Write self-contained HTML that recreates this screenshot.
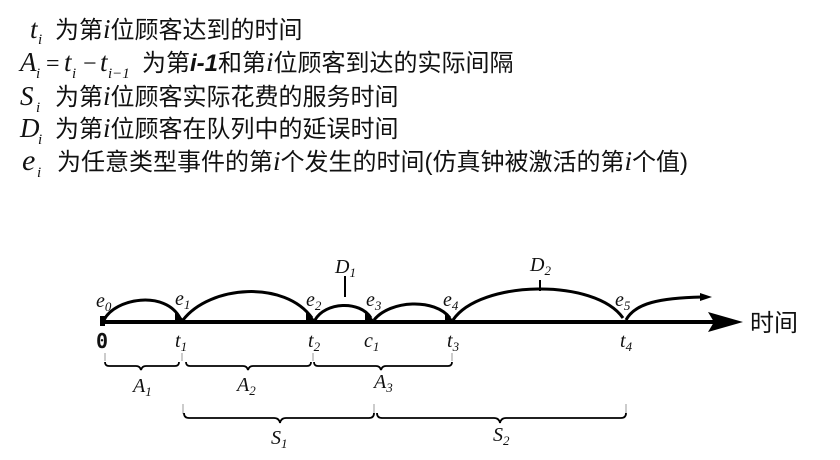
<!DOCTYPE html>
<html><head><meta charset="utf-8"><style>
html,body{margin:0;padding:0;background:#fff;width:840px;height:460px;overflow:hidden}
svg{display:block}
.c{font-family:"Liberation Sans","Noto Sans CJK SC",sans-serif;font-size:24px;fill:#111}
.m{font-family:"Liberation Serif",serif;font-style:italic;fill:#111}
.s{font-family:"Liberation Serif",serif;font-style:italic;fill:#111}
</style></head><body>
<svg width="840" height="460" viewBox="0 0 840 460" xmlns="http://www.w3.org/2000/svg">
<text x="30" y="38" class="m" font-size="27">t</text><text x="38" y="44" class="m" font-size="15">i</text>
<text x="55" y="38" class="c">为第<tspan class="m" font-size="27">i</tspan>位顾客达到的时间</text>

<text x="20" y="71" class="m" font-size="27">A</text><text x="36" y="78" class="m" font-size="15">i</text>
<text x="46" y="71" font-family="Liberation Serif" font-size="24" fill="#111">=</text>
<text x="64" y="71" class="m" font-size="27">t</text><text x="72" y="78" class="m" font-size="15">i</text>
<text x="83" y="71" font-family="Liberation Serif" font-size="24" fill="#111">−</text>
<text x="100" y="71" class="m" font-size="27">t</text><text x="108" y="78" class="m" font-size="15">i−1</text>
<text x="142" y="71" class="c">为第<tspan font-style="italic" font-weight="bold">i-1</tspan>和第<tspan class="m" font-size="27">i</tspan>位顾客到达的实际间隔</text>

<text x="20" y="105" class="m" font-size="27">S</text><text x="36" y="112" class="m" font-size="15">i</text>
<text x="55" y="105" class="c">为第<tspan class="m" font-size="27">i</tspan>位顾客实际花费的服务时间</text>

<text x="20" y="137" class="m" font-size="27">D</text><text x="38" y="144" class="m" font-size="15">i</text>
<text x="55" y="137" class="c">为第<tspan class="m" font-size="27">i</tspan>位顾客在队列中的延误时间</text>

<text x="22" y="170" class="m" font-size="30">e</text><text x="37" y="177" class="m" font-size="15">i</text>
<text x="57" y="170" class="c">为任意类型事件的第<tspan class="m" font-size="27">i</tspan>个发生的时间(仿真钟被激活的第<tspan class="m" font-size="27">i</tspan>个值)</text>

<line x1="102" y1="322" x2="715" y2="322" stroke="#000" stroke-width="4"/>
<polygon points="708,312 743,322 708,332 714,322" fill="#000"/>
<text x="750" y="331" class="c" font-size="22">时间</text>
<rect x="100" y="316" width="5" height="10" fill="#000"/>

<g fill="none" stroke="#000" stroke-width="3">
<path d="M104,320 C115,298 165,290 180,318"/>
<path d="M183,320 C210,285 285,280 312,318"/>
<path d="M315,320 C325,302 360,300 371,318"/>
<path d="M374,320 C390,300 435,298 450,318"/>
<path d="M453,320 C480,280 595,278 623,318"/>
<path d="M626,320 C635,303 660,298 702,297"/>
<line x1="345" y1="276" x2="345" y2="297" stroke-width="2"/>
<line x1="540" y1="280" x2="540" y2="291" stroke-width="2"/>
</g>
<g fill="#000">
<polygon points="175,311 185,321 175,321"/>
<polygon points="306,311 316,321 306,321"/>
<polygon points="365,312 375,321 365,321"/>
<polygon points="445,312 454,321 445,321"/>
<polygon points="700,293 712,297 700,301"/>
</g>

<g class="s" font-size="20">
<text x="96" y="307">e<tspan font-size="13" dy="4">0</tspan></text>
<text x="175" y="305">e<tspan font-size="13" dy="4">1</tspan></text>
<text x="306" y="306">e<tspan font-size="13" dy="4">2</tspan></text>
<text x="366" y="306">e<tspan font-size="13" dy="4">3</tspan></text>
<text x="443" y="306">e<tspan font-size="13" dy="4">4</tspan></text>
<text x="615" y="306">e<tspan font-size="13" dy="4">5</tspan></text>
<text x="335" y="273">D<tspan font-size="13" dy="4">1</tspan></text>
<text x="530" y="271">D<tspan font-size="13" dy="4">2</tspan></text>
<text x="175" y="347">t<tspan font-size="13" dy="4">1</tspan></text>
<text x="308" y="347">t<tspan font-size="13" dy="4">2</tspan></text>
<text x="364" y="347">c<tspan font-size="13" dy="4">1</tspan></text>
<text x="447" y="347">t<tspan font-size="13" dy="4">3</tspan></text>
<text x="620" y="347">t<tspan font-size="13" dy="4">4</tspan></text>
<text x="133" y="392">A<tspan font-size="13" dy="4">1</tspan></text>
<text x="237" y="391">A<tspan font-size="13" dy="4">2</tspan></text>
<text x="374" y="388">A<tspan font-size="13" dy="4">3</tspan></text>
<text x="271" y="444">S<tspan font-size="13" dy="4">1</tspan></text>
<text x="493" y="441">S<tspan font-size="13" dy="4">2</tspan></text>
</g>
<text x="96" y="348" font-family="DejaVu Sans Mono,monospace" font-size="20" font-weight="bold" fill="#111">0</text>

<g stroke="#999" stroke-width="1">
<line x1="105" y1="353" x2="105" y2="361"/>
<line x1="182" y1="353" x2="182" y2="361"/>
<line x1="313" y1="353" x2="313" y2="361"/>
<line x1="452" y1="353" x2="452" y2="361"/>
<line x1="183" y1="404" x2="183" y2="414"/>
<line x1="374" y1="404" x2="374" y2="414"/>
<line x1="626" y1="404" x2="626" y2="414"/>
</g>
<g fill="none" stroke="#000" stroke-width="1.8">
<path d="M105,362 q0,4 4,4 H136 q4,0 5,4 q1,-4 5,-4 H175 q4,0 4,-4"/>
<path d="M186,362 q0,4 4,4 H243 q4,0 5,4 q1,-4 5,-4 H307 q4,0 4,-4"/>
<path d="M314,362 q0,4 4,4 H376 q4,0 5,4 q1,-4 5,-4 H448 q4,0 4,-4"/>
<path d="M184,413 q0,5 5,5 H274 q5,0 6,5 q1,-5 6,-5 H369 q5,0 5,-5"/>
<path d="M377,413 q0,5 5,5 H494 q5,0 6,5 q1,-5 6,-5 H621 q5,0 5,-5"/>
</g>
</svg>
</body></html>
